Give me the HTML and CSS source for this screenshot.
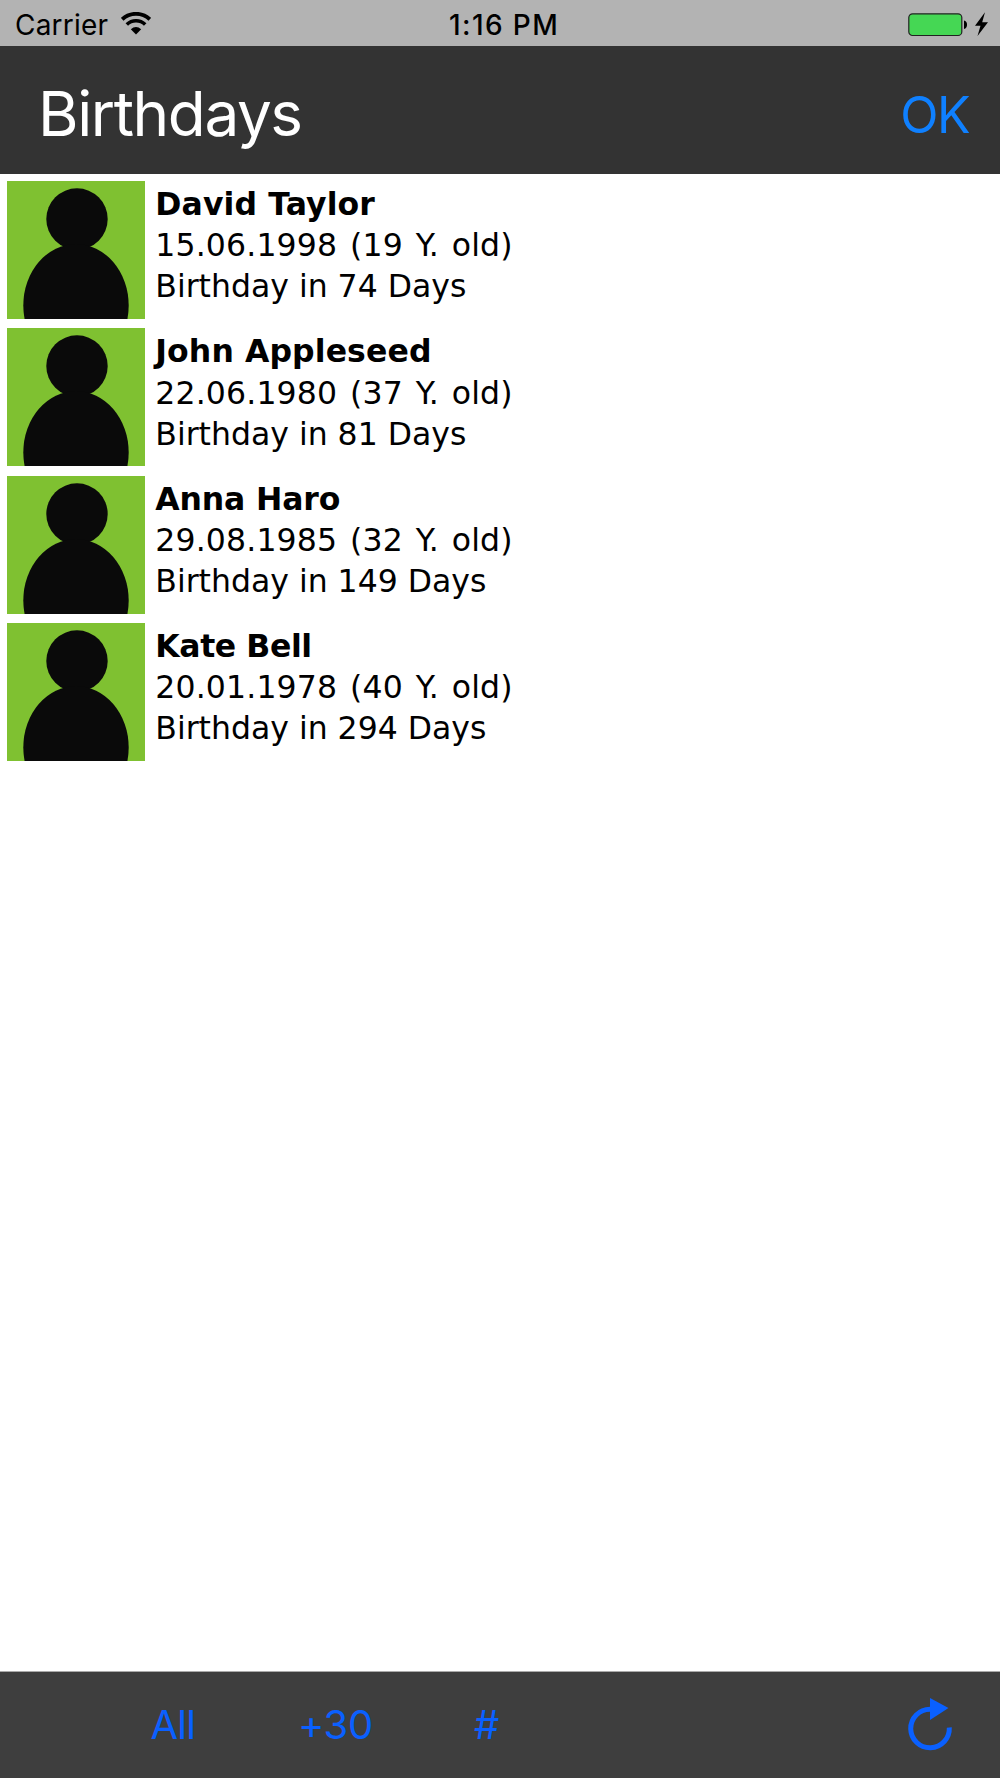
FILE: index.html
```
<!DOCTYPE html>
<html lang="en">
<head>
<meta charset="utf-8">
<title>Birthdays</title>
<link rel="stylesheet" href="styles.css">
</head>
<body>
<svg class="defs" width="0" height="0" aria-hidden="true">
  <symbol id="person" viewBox="0 0 138 138">
    <rect width="138" height="138" fill="#7fc131"/>
    <ellipse cx="70" cy="38" rx="30.7" ry="30.7" fill="#0a0a0a"/>
    <ellipse cx="69" cy="124.500" rx="52.700" ry="61.500" fill="#0a0a0a"/>
  </symbol>
</svg>
<div class="screen">
  <div class="status">
    <div class="network">
      <span class="carrier">Carrier</span>
      <svg class="wifi" width="30" height="23" viewBox="0 0 30 23">
        <path d="M1.200 7.300A20 20 0 0 1 28.800 7.300" fill="none" stroke="#000" stroke-width="3.800"/>
        <path d="M5.800 12.500A13 13 0 0 1 24.200 12.500" fill="none" stroke="#000" stroke-width="3.500"/>
        <path d="M15 22.500L9.800 17.200Q15 13 20.200 17.200Z"/>
      </svg>
    </div>
    <span class="clock">1:16 PM</span>
    <div class="power">
      <svg width="82" height="26" viewBox="0 0 82 26">
        <rect x=".8" y="1.800" width="53" height="21.700" rx="3.800" fill="#45d754" stroke="#222" stroke-width="1.200"/>
        <path d="M56 8.500Q59 9.200 59 12.700T56 17Z"/>
        <path d="M77 .3L67 13.800H72.500L69.500 24L80 10.300H74.200Z"/>
      </svg>
    </div>
  </div>
  <header class="header">
    <h1 class="title">Birthdays</h1>
    <span class="ok">OK</span>
  </header>
  <main class="list">
    <div class="row">
      <svg class="avatar"><use href="#person"/></svg>
      <div class="info"><b class="name">David Taylor</b><span class="date">15.06.1998 (19 Y. old)</span><span class="days">Birthday in 74 Days</span></div>
    </div>
    <div class="row">
      <svg class="avatar"><use href="#person"/></svg>
      <div class="info"><b class="name">John Appleseed</b><span class="date">22.06.1980 (37 Y. old)</span><span class="days">Birthday in 81 Days</span></div>
    </div>
    <div class="row">
      <svg class="avatar"><use href="#person"/></svg>
      <div class="info"><b class="name tight">Anna Haro</b><span class="date">29.08.1985 (32 Y. old)</span><span class="days">Birthday in 149 Days</span></div>
    </div>
    <div class="row">
      <svg class="avatar"><use href="#person"/></svg>
      <div class="info"><b class="name tighter">Kate Bell</b><span class="date">20.01.1978 (40 Y. old)</span><span class="days">Birthday in 294 Days</span></div>
    </div>
  </main>
  <footer class="toolbar">
    <span class="all">All</span>
    <span class="plus">+30</span>
    <span class="hash">#</span>
    <svg class="reload" width="46" height="54" viewBox="0 0 46 54">
      <path d="M41.300 29.500A19.300 19.300 0 1 1 22 11.200" fill="none" stroke="#0a60ff" stroke-width="5"/>
      <path d="M22 0L40.500 10L22 22Z" fill="#0a60ff"/>
    </svg>
  </footer>
</div>
</body>
</html>
```
FILE: styles.css
```
body {
  margin: 0;
  background: #fff;
  font-family: Inter, sans-serif;
}
.defs {
  display: block;
}
.screen {
  height: 1778px;
  display: flex;
  flex-direction: column;
  overflow: hidden;
  white-space: nowrap;
}
.status {
  height: 46px;
  display: grid;
  grid-template-columns: 449px 1fr auto;
  background: #b3b3b3;
  font-size: 28px;
  line-height: 51px;
  color: #000;
}
.network {
  display: flex;
  padding-left: 15px;
}
.carrier {
  width: 106px;
  letter-spacing: .2px;
}
.wifi {
  margin-top: 12px;
}
.clock {
  font-weight: 500;
  letter-spacing: 1.400px;
}
.power {
  padding: 12px 10px 0 0;
  line-height: 0;
}
.header {
  height: 128px;
  box-sizing: border-box;
  padding: 0 31px 0 38px;
  display: flex;
  justify-content: space-between;
  background: #333;
}
.title {
  margin: 0;
  font-size: 62px;
  font-weight: 400;
  line-height: 135px;
  letter-spacing: -1.400px;
  color: #fff;
}
.ok {
  font-size: 50px;
  line-height: 138px;
  letter-spacing: -1.500px;
  color: #0f80ff;
}
.list {
  flex: 1;
  padding: 7px 7px 0 7.300px;
}
.row {
  height: 147.350px;
  display: flex;
  gap: 10px;
}
.avatar {
  width: 138px;
  height: 138px;
}
.info {
  display: flex;
  flex-direction: column;
  padding-top: 3px;
  font-family: "DejaVu Sans", sans-serif;
  font-size: 31.500px;
  line-height: 41.200px;
  color: #000;
}
.name {
  letter-spacing: .1px;
}
.tight {
  letter-spacing: -.15px;
}
.tighter {
  letter-spacing: -.4px;
}
.date {
  letter-spacing: .15px;
  word-spacing: 2.700px;
}
.toolbar {
  height: 107px;
  box-sizing: border-box;
  border-top: 1px solid #aaa;
  display: grid;
  grid-template-columns: 150.500px 147.500px 176px 434px 46px;
  background: #3e3e3e;
  font-size: 40px;
  line-height: 106px;
  color: #0a60ff;
}
.all {
  grid-column: 2;
  letter-spacing: -.8px;
}
.plus {
  letter-spacing: -.4px;
}
.reload {
  margin-top: 26px;
}
```
